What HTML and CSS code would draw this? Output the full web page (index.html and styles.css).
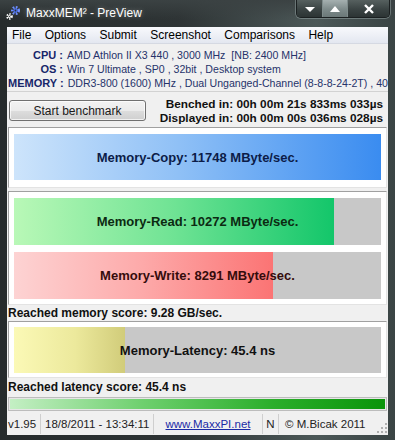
FILE: index.html
```html
<!DOCTYPE html>
<html lang="en">
<head>
    <meta charset="UTF-8">
    <title>MaxxMEM² - PreView</title>
    <link rel="stylesheet" href="styles.css">
</head>
<body>
    <div class="window">
        <div class="titlebar">
            <svg class="appicon" width="16" height="16" viewBox="0 0 16 16">
                <circle cx="10.5" cy="5.5" r="3.2" fill="none" stroke="#6f8fff" stroke-width="2.6" stroke-dasharray="1.6 1.4"/>
                <circle cx="10.5" cy="5.5" r="2.2" fill="#4a6ee8"/>
                <circle cx="10.5" cy="5.5" r="0.9" fill="#2b3132"/>
                <circle cx="4.5" cy="11.5" r="2.3" fill="none" stroke="#ffffff" stroke-width="2" stroke-dasharray="1.2 1.2"/>
                <circle cx="4.5" cy="11.5" r="1.5" fill="#e8e8e8"/>
                <circle cx="4.5" cy="11.5" r="0.6" fill="#2b3132"/>
            </svg>
            <span class="title">MaxxMEM² - PreView</span>
            <div class="caption">
                <div class="capbtn min">
                    <svg width="12" height="8" viewBox="0 0 12 8"><polygon points="1,2 11,2 6,7" fill="#fff"/></svg>
                </div>
                <div class="capbtn max">
                    <svg width="12" height="8" viewBox="0 0 12 8"><polygon points="1,7 11,7 6,1" fill="#fff"/></svg>
                </div>
                <div class="capbtn close">
                    <svg width="12" height="10" viewBox="0 0 12 10"><path d="M2 1 L10 9 M10 1 L2 9" stroke="#fff" stroke-width="2.4"/></svg>
                </div>
            </div>
        </div>

        <div class="client">
            <div class="menubar">
                <span class="menuitem">File</span>
                <span class="menuitem">Options</span>
                <span class="menuitem">Submit</span>
                <span class="menuitem">Screenshot</span>
                <span class="menuitem">Comparisons</span>
                <span class="menuitem">Help</span>
            </div>

            <div class="sysinfo">
                <div class="row">
                    <span class="label">CPU :</span>
                    <span class="value">AMD Athlon II X3 440 , 3000 MHz&nbsp; [NB: 2400 MHz]</span>
                </div>
                <div class="row">
                    <span class="label">OS :</span>
                    <span class="value">Win 7 Ultimate , SP0 , 32bit , Desktop system</span>
                </div>
                <div class="row">
                    <span class="label">MEMORY :</span>
                    <span class="value">DDR3-800 (1600) MHz , Dual Unganged-Channel (8-8-8-24-2T) , 40</span>
                </div>
            </div>

            <div class="toolbar">
                <button class="startbtn">Start benchmark</button>
                <div class="times">
                    <div>Benched in: 00h 00m 21s 833ms 033µs</div>
                    <div>Displayed in: 00h 00m 00s 036ms 028µs</div>
                </div>
            </div>

            <div class="panel copy-panel">
                <div class="bar">
                    <div class="fill copy" style="width: 100%"></div>
                    <div class="barlabel copy-text">Memory-Copy: 11748 MByte/sec.</div>
                </div>
            </div>

            <div class="panel rw-panel">
                <div class="bar">
                    <div class="fill read" style="width: 87.2%"></div>
                    <div class="barlabel read-text">Memory-Read: 10272 MByte/sec.</div>
                </div>
                <div class="bar">
                    <div class="fill write" style="width: 70.6%"></div>
                    <div class="barlabel write-text">Memory-Write: 8291 MByte/sec.</div>
                </div>
            </div>

            <div class="score mem-score">Reached memory score: 9.28 GB/sec.</div>

            <div class="panel lat-panel">
                <div class="bar">
                    <div class="fill latency" style="width: 30.2%"></div>
                    <div class="barlabel">Memory-Latency: 45.4 ns</div>
                </div>
            </div>

            <div class="score lat-score">Reached latency score: 45.4 ns</div>

            <div class="progress"><div class="progressfill"></div></div>

            <div class="statusbar">
                <span class="cell ver">v1.95</span>
                <span class="cell date">18/8/2011 - 13:34:11</span>
                <span class="cell url"><a>www.MaxxPI.net</a></span>
                <span class="cell mode">N</span>
                <span class="cell copy-right">© M.Bicak 2011</span>
                <svg class="grip" width="10" height="10" viewBox="0 0 10 10">
                    <rect x="8" y="0" width="2" height="2" fill="#b0b0b0"/>
                    <rect x="4" y="4" width="2" height="2" fill="#b0b0b0"/>
                    <rect x="8" y="4" width="2" height="2" fill="#b0b0b0"/>
                    <rect x="0" y="8" width="2" height="2" fill="#b0b0b0"/>
                    <rect x="4" y="8" width="2" height="2" fill="#b0b0b0"/>
                    <rect x="8" y="8" width="2" height="2" fill="#b0b0b0"/>
                </svg>
            </div>
        </div>
    </div>
</body>
</html>
```

FILE: styles.css
```css
*{
    box-sizing: border-box;
}
body{
    margin: 0;
    width: 395px;
    height: 440px;
    overflow: hidden;
    background: #1f2324;
    font-family: "Liberation Sans", Arial, sans-serif;
}
.window{
    width: 395px;
    height: 440px;
    display: flex;
    flex-direction: column;
    padding: 0 7px 5px 7px;
    background: linear-gradient(to right, #262b2c 0%, #2e3435 45%, #4c5858 80%, #3a4444 100%);
}

/* title bar */
.titlebar{
    height: 27px;
    margin: 0 -7px;
    padding-left: 5px;
    display: flex;
    align-items: flex-start;
    background: linear-gradient(#3b4243, rgba(40,45,46,0) 70%);
}
.appicon{
    margin-top: 5px;
}
.title{
    color: #fff;
    font-size: 12px;
    margin-left: 5px;
    margin-top: 6px;
    text-shadow: 0 0 5px rgba(255,255,255,0.35);
}
.caption{
    margin-left: auto;
    margin-right: 5px;
    display: flex;
    height: 18px;
    border: 1px solid #1b2021;
    border-top: none;
    border-radius: 0 0 5px 5px;
    overflow: hidden;
    box-shadow: 0 0 0 1px rgba(160,175,175,0.45);
}
.capbtn{
    display: flex;
    align-items: center;
    justify-content: center;
    background: linear-gradient(#56605f, #3a4343 55%, #2c3434);
    border-left: 1px solid #7f8c8c;
}
.capbtn.min{
    width: 25px;
    border-left: none;
}
.capbtn.max{
    width: 25px;
    background: linear-gradient(#a5b0b0, #7d8a8a 55%, #6b7878);
}
.capbtn.close{
    width: 42px;
}

/* client area */
.client{
    flex: 1;
    background: #f0f0f0;
    display: flex;
    flex-direction: column;
    overflow: hidden;
}
.menubar{
    height: 17px;
    display: flex;
    align-items: center;
    font-size: 12px;
    color: #000;
    background: linear-gradient(#f8f9fc, #e3e7f0);
    border-bottom: 1px solid #d5d9e2;
}
.menuitem{
    padding: 0 6.6px 0 5px;
}
.menuitem + .menuitem{
    padding-left: 6.8px;
}

.sysinfo{
    height: 48px;
    padding: 4px 0 0 1px;
    font-size: 11px;
    line-height: 14px;
    white-space: nowrap;
    border-bottom: 1px solid #d2d2d2;
}
.row{
    display: flex;
    gap: 4px;
    height: 14px;
}
.label{
    flex: 0 0 55px;
    text-align: right;
    font-weight: bold;
    color: #17266a;
}
.value{
    font-size: 10.6px;
    color: #26336a;
}

.toolbar{
    height: 35px;
    display: flex;
    justify-content: space-between;
    align-items: flex-start;
    padding: 0 5px 0 2px;
}
.startbtn{
    margin-top: 8px;
    width: 137px;
    height: 21px;
    padding: 0;
    font-family: "Liberation Sans", Arial, sans-serif;
    font-size: 12px;
    color: #1a1a1a;
    border: 1px solid #707070;
    border-radius: 3px;
    background: linear-gradient(#f2f2f2 0%, #ebebeb 50%, #dddddd 51%, #cfcfcf 100%);
    box-shadow: inset 0 0 0 1px rgba(255,255,255,0.7);
}
.times{
    margin-top: 5px;
    font-size: 11.8px;
    font-weight: bold;
    line-height: 14px;
    text-align: right;
    color: #111;
}

/* result panels */
.panel{
    margin: 0 1px;
    background: #fff;
    border-top: 1px solid #a0a0a0;
    border-left: 1px solid #a0a0a0;
    border-right: 1px solid #e3e3e3;
    border-bottom: 1px solid #e3e3e3;
    padding: 6px 5px 7px 5px;
    display: flex;
    flex-direction: column;
    gap: 7px;
}
.copy-panel .bar{
    height: 46px;
}
.rw-panel{
    margin-top: 3px;
    padding-bottom: 5px;
}
.rw-panel .bar{
    height: 47px;
}
.lat-panel{
    padding: 5px 5px 4px 5px;
}
.lat-panel .bar{
    height: 46px;
}
.bar{
    position: relative;
    background: #c8c8c8;
}
.fill{
    height: 100%;
}
.fill.copy{
    background: linear-gradient(to right, #cde4fb, #8fc0f6 45%, #3a8cf0);
}
.fill.read{
    background: linear-gradient(to right, #b9f8b7, #6fe394 50%, #13c66a);
}
.fill.write{
    background: linear-gradient(to right, #fdd3d3, #fda9a9 50%, #fb7474);
}
.fill.latency{
    background: linear-gradient(to right, #fbf9b6, #ece99c 55%, #d1cc7a);
}
.barlabel{
    position: absolute;
    inset: 0;
    display: flex;
    align-items: center;
    justify-content: center;
    font-size: 13px;
    font-weight: bold;
    color: #111;
}
.copy-text{
    color: #0c1c48;
}
.read-text{
    color: #0c2a12;
}
.write-text{
    color: #350c0c;
}

.score{
    padding-left: 1px;
    font-size: 12px;
    font-weight: bold;
    color: #111;
    display: flex;
    align-items: center;
}
.mem-score{
    height: 16px;
}
.lat-score{
    height: 18px;
}

.progress{
    margin: 1px 1px 0 1px;
    height: 14px;
    border: 1px solid #bcbcbc;
    background: #e6e6e6;
    padding: 1px;
}
.progressfill{
    height: 100%;
    background: linear-gradient(to right, #c4efc4, #6fd06f 35%, #2bae2b 70%, #0a940a);
}

/* status bar */
.statusbar{
    height: 23px;
    display: flex;
    align-items: center;
    font-size: 11.5px;
    color: #222;
    position: relative;
    padding-top: 3px;
}
.cell{
    height: 100%;
    display: flex;
    align-items: center;
    border-left: 1px solid #cfcfcf;
}
.ver{
    width: 33px;
    padding-left: 1px;
    border-left: none;
}
.date{
    width: 113px;
    padding-left: 4px;
}
.url{
    width: 109px;
    justify-content: center;
}
.url a{
    color: #1a2aa6;
    text-decoration: underline;
}
.mode{
    width: 16px;
    justify-content: center;
}
.copy-right{
    flex: 1;
    padding-left: 6px;
}
.grip{
    position: absolute;
    right: 1px;
    bottom: 1px;
}
```
